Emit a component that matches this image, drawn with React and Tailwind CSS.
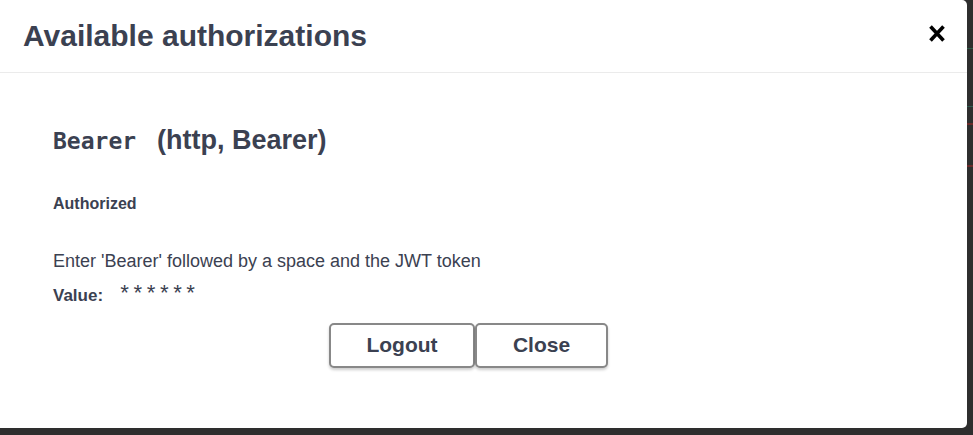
export default function App() {
  const sans = { fontFamily: '"Liberation Sans", Arial, sans-serif' };
  return (
    <div className="w-[973px] h-[435px] bg-[#2e2e2e] flex overflow-hidden" style={sans}>
      <div className="flex flex-col">
        <div className="w-[967px] h-[428px] bg-white rounded-r-[5px] flex flex-col text-[#3b4151]">
          <div className="h-[73px] shrink-0 border-b border-[#ebebeb] flex items-center justify-between pl-[23px] pr-[21px]">
            <h3 className="text-[30px] font-bold leading-none">Available authorizations</h3>
            <button className="w-[18px] h-[18px] flex items-center justify-center -mt-[5px]">
              <svg width="16" height="17" viewBox="0 0 16 17">
                <path d="M1.5 1.5 L14.5 15.5 M14.5 1.5 L1.5 15.5" stroke="#000" strokeWidth="3.6" strokeLinecap="butt" />
              </svg>
            </button>
          </div>
          <div className="pl-[53px] pt-[52px] flex flex-col">
            <h4 className="text-[24px] font-bold leading-[30px] flex items-baseline">
              <code className="text-[23px]" style={{ fontFamily: '"DejaVu Sans Mono", monospace' }}>Bearer</code>
              <span className="ml-[21px] text-[27px]">(http, Bearer)</span>
            </h4>
            <h6 className="text-[16px] font-bold leading-[20px] mt-[38px]">Authorized</h6>
            <p className="text-[18px] leading-[22px] mt-[36px]">Enter 'Bearer' followed by a space and the JWT token</p>
            <div className="flex items-baseline mt-[11px]">
              <label className="text-[17px] font-bold">Value:</label>
              <span className="ml-[15px] text-[22px] leading-[22px]" style={{ fontFamily: '"Liberation Mono", monospace' }}>******</span>
            </div>
          </div>
          <div className="flex justify-center mt-[14px] pr-[30px]">
            <button className="w-[146px] h-[45px] border-2 border-[#888] rounded-[5px] bg-white text-[21px] font-bold shadow-[0_2px_3px_rgba(0,0,0,0.2)]">Logout</button>
            <button className="w-[133px] h-[45px] border-2 border-[#888] rounded-[5px] bg-white text-[21px] font-bold shadow-[0_2px_3px_rgba(0,0,0,0.2)]">Close</button>
          </div>
        </div>
      </div>
      <div className="flex-1 flex flex-col">
        <div className="h-[48px]" />
        <div className="h-[1px] bg-[#2f5a47]" />
        <div className="h-[57px]" />
        <div className="h-[1px] bg-[#2f5a4f]" />
        <div className="h-[16px]" />
        <div className="h-[2px] bg-[#6b2a2a]" />
        <div className="h-[40px]" />
        <div className="h-[2px] bg-[#6b2a2a]" />
      </div>
    </div>
  );
}
